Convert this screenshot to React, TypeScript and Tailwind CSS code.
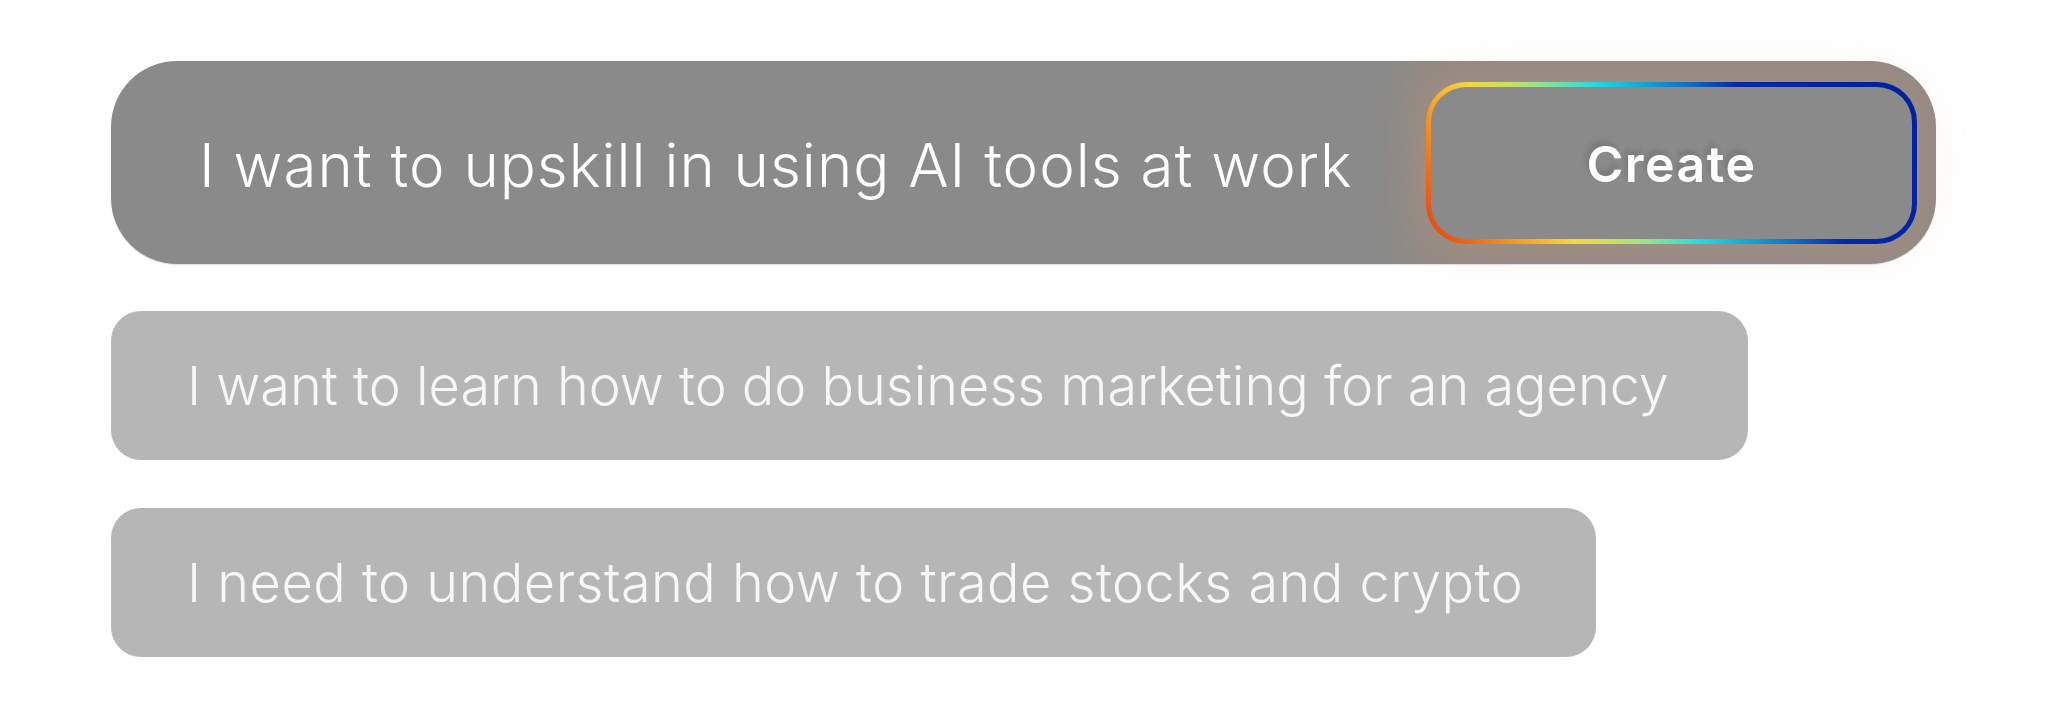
import React from "react";

const suggestions = [
  { text: "I want to learn how to do business marketing for an agency", width: "w-[1637px]", tracking: "tracking-[0px]" },
  { text: "I need to understand how to trade stocks and crypto", width: "w-[1485px]", tracking: "tracking-[0.5px]" },
];

const CreateButton = () => (
  <button
    className="w-[491px] h-[162px] rounded-[40px] p-[5px] shrink-0
               bg-[linear-gradient(56deg,#e0400f_0%,#ec6a1c_8%,#f6a626_17%,#f5d840_25%,#c5e064_32%,#95e38c_37%,#22dce0_46%,#12a6d6_54%,#0e6cc0_62%,#0028a8_70%,#0020a0_100%)]
               shadow-[0_0_50px_rgba(240,170,130,0.22)]"
  >
    <span
      className="flex h-full w-full items-center justify-center rounded-[35px] bg-[#8a8a8a]
                 text-white text-[50px] font-semibold tracking-[1.5px] pt-[3px]
                 [text-shadow:-3px_-5px_5px_rgba(0,0,0,0.12)]"
    >
      Create
    </span>
  </button>
);

const App = () => {
  return (
    <div className="w-[2048px] h-[721px] bg-white font-['Inter','Liberation_Sans',sans-serif] pt-[61px] pl-[111px]">
      {/* Prompt bar */}
      <div
        className="flex items-center justify-between w-[1825px] h-[203px] rounded-[66px]
                   pl-[88px] pr-[19px]
                   bg-[linear-gradient(to_right,#8a8a8a_69.5%,#938a84_71.8%)]
                   shadow-[0_1px_1px_rgba(0,0,0,0.12)]"
      >
        <span className="text-white text-[60px] font-light tracking-[1px] leading-none pt-[4px]">
          I want to upskill in using AI tools at work
        </span>
        <CreateButton />
      </div>

      {/* Suggestions */}
      <div className="flex flex-col gap-[48px] mt-[47px]">
        {suggestions.map((s) => (
          <div
            key={s.text}
            className={`${s.width} h-[149px] flex items-center rounded-[30px] bg-[#b6b6b6] pl-[76px]`}
          >
            <span className={`${s.tracking} text-[#f7f7f7] text-[54px] font-light leading-none`}>
              {s.text}
            </span>
          </div>
        ))}
      </div>
    </div>
  );
};

export default App;
